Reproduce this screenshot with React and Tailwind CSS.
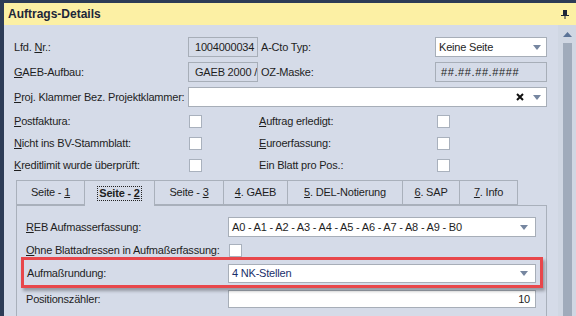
import React from "react";

const font = { fontFamily: '"Liberation Sans", Arial, sans-serif' };

// small underlined mnemonic letter
function U({ children }) {
  return <span className="underline underline-offset-[1px]">{children}</span>;
}

function Arrow({ className = "" }) {
  return (
    <svg width="8" height="5" viewBox="0 0 8 5" className={className}>
      <path d="M0 0 H8 L4 5 Z" fill="#7686a0" />
    </svg>
  );
}

function Checkbox() {
  return <div className="w-[13px] h-[13px] shrink-0 bg-white border border-[#a9b1bd]" />;
}

function Tab({ w, active, children }) {
  return (
    <div
      className={
        "h-[25px] flex items-center justify-center border border-[#a9b0bb] -ml-px first:ml-0 " +
        (active ? "border-b-0 bg-[#d5dbe8] font-bold relative z-10 h-[26px] -mb-px" : "")
      }
      style={{ width: w }}
    >
      {active ? (
        <span className="px-[1px] outline outline-1 outline-dotted outline-[#222] leading-[13px]">
          {children}
        </span>
      ) : (
        <span>{children}</span>
      )}
    </div>
  );
}

export default function App() {
  return (
    <div
      style={font}
      className="w-[576px] h-[316px] overflow-hidden bg-[#2d3c56] pt-[3px] pl-[4px] text-[11px] tracking-[-0.2px] whitespace-nowrap text-[#1e1e1e] flex flex-col"
    >
      {/* header */}
      <div className="h-[22px] bg-[#fcf0a4] flex items-center justify-between pl-[4px] pr-[7px] shrink-0">
        <span className="font-bold text-[12px] tracking-normal text-[#1d2638]">Auftrags-Details</span>
        <svg width="8" height="9" viewBox="0 0 8 9">
          <rect x="2" y="0" width="4" height="5" fill="#1d2638" />
          <rect x="0" y="5" width="8" height="1" fill="#1d2638" />
          <rect x="3.5" y="6" width="1" height="3" fill="#1d2638" />
        </svg>
      </div>

      <div className="flex-1 flex bg-[#d5dbe8] min-h-0">
        {/* main form */}
        <div className="w-[554px] pl-[10px] pt-[12px] flex flex-col overflow-hidden *:shrink-0">
          <div className="h-[20px] flex items-center">
            <div className="w-[174px]">Lfd. <U>N</U>r.:</div>
            <div className="w-[70px] h-[20px] border border-[#a7aeb8] flex items-center pl-[6px]">1004000034</div>
            <div className="w-[174px] ml-[3px]">A-Cto Typ:</div>
            <div className="w-[112px] h-[20px] bg-white border border-[#a7aeb8] flex items-center justify-between pl-[3px] pr-[5px]">
              <span>Keine Seite</span>
              <Arrow />
            </div>
          </div>
          <div className="h-[20px] mt-[5px] flex items-center">
            <div className="w-[174px]"><U>G</U>AEB-Aufbau:</div>
            <div className="w-[70px] h-[20px] border border-[#a7aeb8] flex items-center pl-[6px] overflow-hidden">GAEB 2000 /</div>
            <div className="w-[174px] ml-[3px]">OZ-Maske:</div>
            <div className="w-[112px] h-[20px] border border-[#a7aeb8] flex items-center pl-[5px] tracking-[0.6px]">##.##.##.####</div>
          </div>
          <div className="h-[20px] mt-[5px] flex items-center">
            <div className="w-[174px]"><U>P</U>roj. Klammer Bez. Projektklammer:</div>
            <div className="w-[359px] h-[20px] bg-white border border-[#a7aeb8] flex items-center justify-end gap-[9px] pr-[5px]">
              <svg width="8" height="8" viewBox="0 0 8 8">
                <path d="M1 1 L7 7 M7 1 L1 7" stroke="#111" strokeWidth="2" />
              </svg>
              <Arrow />
            </div>
          </div>

          <div className="mt-[3px] h-[22px] flex items-center">
            <div className="w-[175px]"><U>P</U>ostfaktura:</div>
            <Checkbox />
            <div className="w-[235px] pl-[57px]"><U>A</U>uftrag erledigt:</div>
            <Checkbox />
          </div>
          <div className="h-[22px] flex items-center">
            <div className="w-[175px]"><U>N</U>icht ins BV-Stammblatt:</div>
            <Checkbox />
            <div className="w-[235px] pl-[57px]"><U>E</U>uroerfassung:</div>
            <Checkbox />
          </div>
          <div className="h-[22px] flex items-center">
            <div className="w-[175px]"><U>K</U>reditlimit wurde überprüft:</div>
            <Checkbox />
            <div className="w-[235px] pl-[57px]">Ein Blatt pro Pos.:</div>
            <Checkbox />
          </div>

          {/* tabs */}
          <div className="mt-[4px] ml-[2px] flex items-end">
            <Tab w={69}>Seite - <U>1</U></Tab>
            <Tab w={71} active>Seite - <U>2</U></Tab>
            <Tab w={70}>Seite - <U>3</U></Tab>
            <Tab w={65}><U>4</U>. GAEB</Tab>
            <Tab w={116}><U>5</U>. DEL-Notierung</Tab>
            <Tab w={58}><U>6</U>. SAP</Tab>
            <Tab w={59}><U>7</U>. Info</Tab>
          </div>
          <div className="ml-[2px] w-[531px] border border-[#a9b0bb] border-b-0 pt-[11px] pb-[10px] flex flex-col *:shrink-0">
            <div className="h-[20px] flex items-center pl-[9px] pr-[10px]">
              <div className="w-[202px]"><U>R</U>EB Aufmasserfassung:</div>
              <div className="flex-1 h-[20px] bg-white border border-[#a7aeb8] flex items-center justify-between pl-[3px] pr-[7px]">
                <span>A0 - A1 - A2 - A3 - A4 - A5 - A6 - A7 - A8 - A9 - B0</span>
                <Arrow />
              </div>
            </div>
            <div className="h-[13px] mt-[7px] flex items-center pl-[9px]">
              <div className="w-[203px]"><U>O</U>hne Blattadressen in Aufmaßerfassung:</div>
              <Checkbox />
            </div>
            <div className="relative z-10 h-[31px] ml-[4px] mr-[3px] border-[3px] border-[#e8474b] shadow-[2px_3px_3px_rgba(0,0,0,0.3)] flex items-start pt-[4px] pl-[3px] pr-[4px]">
              <div className="w-[201px] h-[19px] flex items-center">Aufmaßrundung:</div>
              <div className="flex-1 h-[19px] bg-white border border-[#a7aeb8] flex items-center justify-between pl-[3px] pr-[7px]">
                <span className="text-[#1a2f6b]">4 NK-Stellen</span>
                <Arrow />
              </div>
            </div>
            <div className="h-[18px] mt-[2px] flex items-center pl-[9px] pr-[10px]">
              <div className="w-[202px]">Positionszähler:</div>
              <div className="flex-1 h-[18px] bg-white border border-[#a7aeb8] flex items-center justify-end pr-[5px]">10</div>
            </div>
            <div className="h-[14px] mt-[7px] flex items-center pl-[9px]">
              <div>Aufmaß-Zeilen:</div>
            </div>
          </div>
        </div>

        {/* scrollbar */}
        <div className="w-[18px] bg-[#d0d7e3] flex flex-col items-center pt-[7px] pl-[1px]">
          <svg width="9" height="5" viewBox="0 0 9 5">
            <path d="M0 5 L4.5 0 L9 5 Z" fill="#5b7397" />
          </svg>
          <div className="w-[9px] flex-1 mt-[6px] bg-[#a0abbb]" />
        </div>
      </div>
    </div>
  );
}
